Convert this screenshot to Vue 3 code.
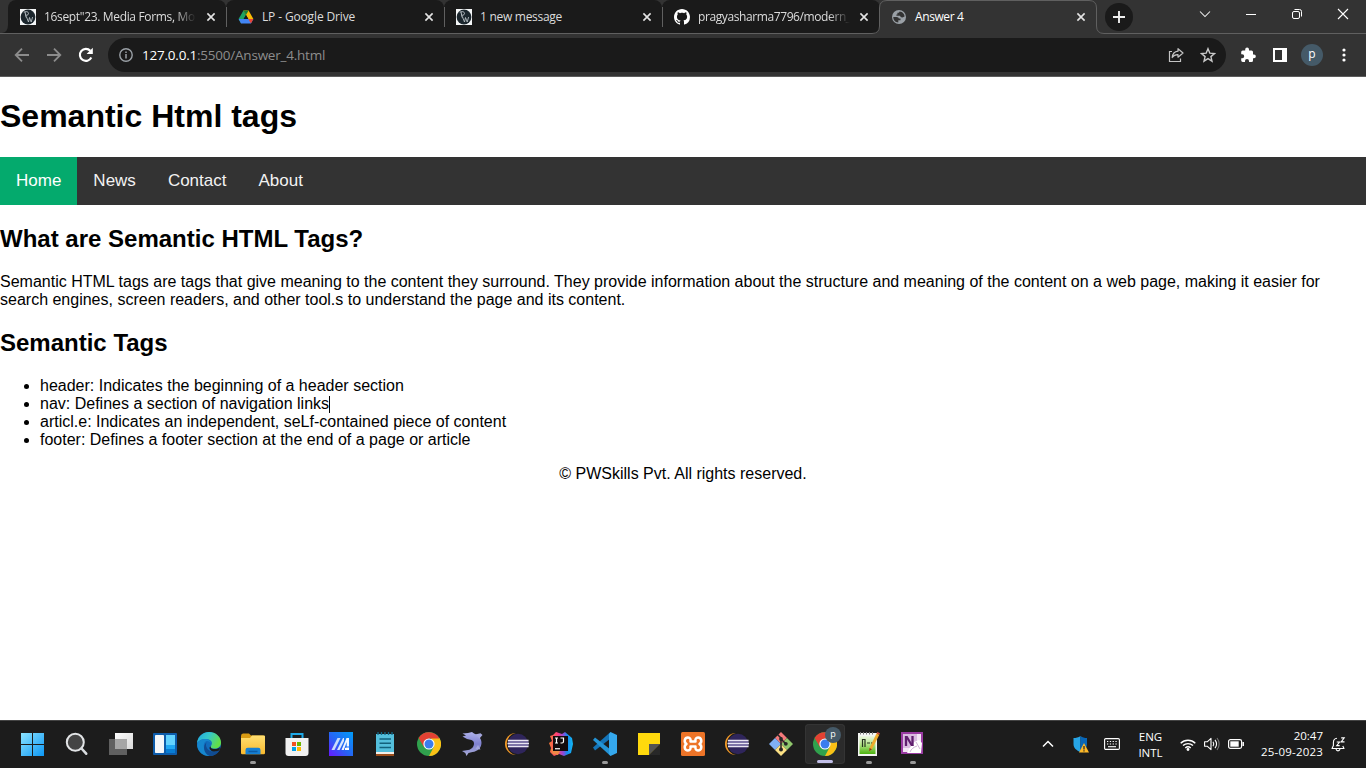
<script setup>
const tabs = [
  { title: '16sept"23. Media Forms, Mo', icon: 'pw', cls: 't1' },
  { title: 'LP - Google Drive', icon: 'drive', cls: 't2' },
  { title: '1 new message', icon: 'pw', cls: 't3' },
  { title: 'pragyasharma7796/modern_', icon: 'github', cls: 't4' },
  { title: 'Answer 4', icon: 'globe', cls: 'active' }
]
const links = ['Home', 'News', 'Contact', 'About']
const apps = [
  { n: 'start' }, { n: 'search' }, { n: 'taskview' }, { n: 'widgets' }, { n: 'edge' },
  { n: 'files', open: true }, { n: 'store' }, { n: 'myasus' }, { n: 'notepad' }, { n: 'chrome' },
  { n: 'dolphin' }, { n: 'eclipse' }, { n: 'intellij' }, { n: 'vscode', open: true }, { n: 'sticky' },
  { n: 'xampp' }, { n: 'eclipse' }, { n: 'git' }, { n: 'chrome', current: true },
  { n: 'notepadpp', open: true }, { n: 'onenote', open: true }
]
</script>

<template>
  <div class="screen">
    <header class="strip">
      <div v-for="(t, i) in tabs" :key="i" class="tab" :class="t.cls">
        <svg v-if="t.icon === 'pw'" class="fav" viewBox="0 0 16 16">
          <rect width="16" height="16" fill="#f4f6f7" />
          <circle cx="8" cy="8" r="7.400" fill="#1b262d" />
          <path d="M5 3l1.200 5.500M3.800 3.200c3-1.400 5.200 0 4.600 1.800-.4 1.100-1.600 1.400-2.800 1.200" fill="none" stroke="#c4cbcf" stroke-width=".9" />
          <path d="M6.300 7.500l2.200 5.500 1-4.500 1.700 4.500L12.600 8" fill="none" stroke="#c4cbcf" stroke-width=".8" />
        </svg>
        <svg v-else-if="t.icon === 'drive'" class="fav" viewBox="0 0 16 16">
          <path d="M5.400 1.500L.6 10l2.500 4.500L8 6z" fill="#1ea362" />
          <path d="M10.600 1.500L15.400 10h-5.100L5.400 1.500z" fill="#fbbc04" />
          <path d="M5.400 1.500L8 6l2.600-4.500z" fill="#188038" />
          <path d="M.6 10h14.800l-2.500 4.500H3.100z" fill="#4285f4" />
          <path d="M10.300 10h5.100l-2.500 4.500z" fill="#ea4335" />
          <path d="M8 6l2.300 4H5.700z" fill="#1a1a1a" />
        </svg>
        <svg v-else-if="t.icon === 'github'" class="fav" viewBox="0 0 16 16">
          <path fill="#fff" d="M8 0C3.580 0 0 3.580 0 8c0 3.540 2.290 6.530 5.470 7.590.4.070.55-.17.55-.38 0-.19-.01-.82-.01-1.490-2.010.37-2.530-.49-2.690-.94-.09-.23-.48-.94-.82-1.130-.28-.15-.68-.52-.01-.53.63-.01 1.080.58 1.230.82.72 1.210 1.870.87 2.330.66.070-.52.28-.87.51-1.070-1.780-.2-3.640-.89-3.640-3.950 0-.87.31-1.590.82-2.150-.08-.2-.36-1.020.08-2.120 0 0 .67-.21 2.200.82.64-.18 1.320-.27 2-.27s1.360.09 2 .27c1.530-1.040 2.200-.82 2.200-.82.44 1.100.16 1.920.08 2.120.51.56.82 1.270.82 2.150 0 3.070-1.870 3.750-3.650 3.950.29.25.54.73.54 1.480 0 1.070-.01 1.930-.01 2.200 0 .21.15.46.55.38A8.010 8.010 0 0016 8c0-4.420-3.580-8-8-8z" />
        </svg>
        <svg v-else class="fav" viewBox="0 0 16 16">
          <circle cx="8" cy="8" r="7" fill="#9aa0a6" />
          <path d="M2.300 8h3.200c1.800 0 2.200.8 2.300 1.600h1.700v1.700H7.300v2.200C4.200 13.300 2.200 11 2.300 8zM8.600 2.400c-.2.800-.6 1.300-2.200 1.300v1.700h-1v1.300h3.500c.6.800.8 1.700 2.300 1.700s1.300-.8 2.400-.8C13.600 4.900 11.500 2.500 8.600 2.400z" fill="#333" />
        </svg>
        <span class="title">{{ t.title }}</span>
        <svg class="close" viewBox="0 0 10 10"><path d="M1.400 1.400l7.200 7.200M8.600 1.400L1.400 8.600" stroke="#e4e4e4" stroke-width="1.600" /></svg>
      </div>
      <svg class="newtab" viewBox="0 0 28 28"><circle cx="14" cy="14" r="14" fill="#1a1a1a" /><path d="M14 8v12M8 14h12" stroke="#eee" stroke-width="1.900" /></svg>
      <div class="winctl">
        <svg viewBox="0 0 12 12"><path d="M1 3.500l5 5 5-5" fill="none" stroke="#f4f4f4" stroke-width="1.050" /></svg>
        <svg viewBox="0 0 12 12"><path d="M1 6.500h10" stroke="#fff" /></svg>
        <svg viewBox="0 0 12 12"><rect x="1.500" y="3.500" width="7" height="7" rx="1.500" fill="none" stroke="#fff" /><path d="M3.500 1.500h5a2 2 0 012 2v5" fill="none" stroke="#fff" /></svg>
        <svg viewBox="0 0 12 12"><path d="M1 1l10 10M11 1L1 11" stroke="#fff" stroke-width="1.100" /></svg>
      </div>
      <svg class="edgeline" viewBox="0 0 1366 34">
        <path d="M2 33Q8 32 8 25V33z" fill="#1a1a1a" />
        <path d="M0 33.500H872Q879.500 33.500 879.500 26V8Q879.500.5 887 .5H1089Q1096.500.5 1096.500 8V26Q1096.500 33.500 1104 33.500H1366" fill="none" stroke="#606060" />
      </svg>
    </header>

    <div class="toolbar">
      <svg class="nav back" viewBox="0 0 16 16"><path d="M15 8H2M8 1.700L1.700 8 8 14.300" fill="none" stroke="#8c8c8c" stroke-width="1.800" /></svg>
      <svg class="nav fwd" viewBox="0 0 16 16"><path d="M1 8h13M8 1.700L14.300 8 8 14.300" fill="none" stroke="#8c8c8c" stroke-width="1.800" /></svg>
      <svg class="nav reload" viewBox="0 0 16 16"><path d="M13.300 10.500A6 6 0 1112.300 3.800" fill="none" stroke="#fff" stroke-width="2.100" /><path d="M14.800.8v6.200H8.600z" fill="#fff" /></svg>
      <div class="omnibox">
        <svg class="info" viewBox="0 0 14 14"><circle cx="7" cy="7" r="6.200" fill="none" stroke="#9aa0a6" stroke-width="1.400" /><path d="M7 6v4.500M7 3.400v1.500" stroke="#9aa0a6" stroke-width="1.500" /></svg>
        <span class="url"><b>127.0.0.1</b>:5500/Answer_4.html</span>
        <svg class="share" viewBox="0 0 16 16"><path d="M4 4.500H1.500V14.500H12.500V11.500" fill="none" stroke="#c4c4c4" stroke-width="1.200" /><path d="M10 1.700L15 6l-5 4.200V7.700C7.500 7.600 5.600 8.400 4.200 10.500 4.500 7.200 6.500 4.700 10 4.200z" fill="none" stroke="#c4c4c4" stroke-width="1.200" stroke-linejoin="round" /></svg>
        <svg class="star" viewBox="0 0 16 16"><path d="M8 1.700l1.800 4.400 4.700.4-3.600 3.100 1.100 4.600L8 11.700l-4 2.500 1.100-4.600-3.600-3.100 4.700-.4z" fill="none" stroke="#c9c9c9" stroke-width="1.400" /></svg>
      </div>
      <svg class="puzzle" viewBox="0 0 16 16"><path d="M14 7.500h-1V5a1.500 1.500 0 00-1.500-1.500H9v-1a1.900 1.900 0 00-3.800 0v1H2.700A1.500 1.500 0 001.200 5v2.300h1a2 2 0 010 4h-1v2.300A1.500 1.500 0 002.700 15H5v-1a2 2 0 014 0v1h2.500a1.500 1.500 0 001.500-1.500v-2.300h1a1.850 1.850 0 000-3.700z" fill="#fff" /></svg>
      <svg class="panel" viewBox="0 0 14 14"><rect x="1" y="1" width="12" height="12" fill="none" stroke="#fff" stroke-width="2" /><path d="M9 1h4v12H9z" fill="#fff" /></svg>
      <span class="avatar">p</span>
      <svg class="dots" viewBox="0 0 4 16"><circle cx="2" cy="3" r="1.600" fill="#fff" /><circle cx="2" cy="8" r="1.600" fill="#fff" /><circle cx="2" cy="13" r="1.600" fill="#fff" /></svg>
    </div>

    <main class="page">
      <h1>Semantic Html tags</h1>
      <nav class="topnav"><a v-for="(l, i) in links" :key="l" :class="{ on: i === 0 }">{{ l }}</a></nav>
      <h2>What are Semantic HTML Tags?</h2>
      <p>Semantic HTML tags are tags that give meaning to the content they surround. They provide information about the structure and meaning of the content on a web page, making it easier for<br>search engines, screen readers, and other tool.s to understand the page and its content.</p>
      <h2>Semantic Tags</h2>
      <ul>
        <li>header: Indicates the beginning of a header section</li>
        <li>nav: Defines a section of navigation links<i class="caret"></i></li>
        <li>articl.e: Indicates an independent, seLf-contained piece of content</li>
        <li>footer: Defines a footer section at the end of a page or article</li>
      </ul>
      <footer>© PWSkills Pvt. All rights reserved.</footer>
    </main>

    <div class="taskbar">
      <svg class="defs" width="0" height="0">
        <defs>
          <linearGradient id="win" x1="0" y1="0" x2="1" y2="1"><stop offset="0" stop-color="#8be3ff" /><stop offset="1" stop-color="#0c97f5" /></linearGradient>
          <linearGradient id="folder" x1="0" y1="0" x2="0" y2="1"><stop offset="0" stop-color="#ffdf72" /><stop offset="1" stop-color="#f9b92d" /></linearGradient>
          <linearGradient id="asus" x1="1" y1="0" x2="0" y2="1"><stop offset="0" stop-color="#009df8" /><stop offset=".55" stop-color="#2763f4" /><stop offset="1" stop-color="#6818ff" /></linearGradient>
          <linearGradient id="edgeTop" x1="0" y1="0" x2="1" y2=".4"><stop offset="0" stop-color="#20a7df" /><stop offset=".5" stop-color="#35c8ca" /><stop offset="1" stop-color="#62df48" /></linearGradient>
          <linearGradient id="dol" x1="0" y1="0" x2="0" y2="1"><stop offset="0" stop-color="#aeb1ea" /><stop offset=".5" stop-color="#7f81d0" /><stop offset="1" stop-color="#aaaed8" /></linearGradient>
          <linearGradient id="ij" x1="0" y1="0" x2="1" y2="0"><stop offset="0" stop-color="#f97a35" /><stop offset=".35" stop-color="#ff3c78" /><stop offset=".6" stop-color="#8b4bdc" /><stop offset=".75" stop-color="#1689ee" /><stop offset="1" stop-color="#13b9f4" /></linearGradient>
          <linearGradient id="task" x1="0" y1="0" x2="1" y2="1"><stop offset="0" stop-color="#fff" /><stop offset="1" stop-color="#d8d8d8" /></linearGradient>
          <linearGradient id="npp" x1="0" y1="0" x2="0" y2="1"><stop offset="0" stop-color="#eef8e4" /><stop offset=".45" stop-color="#b5e58a" /><stop offset="1" stop-color="#4db30f" /></linearGradient>
        </defs>
      </svg>
      <div class="apps">
        <div v-for="(a, i) in apps" :key="i" class="app" :class="{ open: a.open, current: a.current }">
          <svg class="ico" viewBox="0 0 24 24">
            <g v-if="a.n === 'start'"><path d="M0 1h23v23H0z" fill="url(#win)" /><path d="M11 1h1v23h-1zM0 12h23v1H0z" fill="#1c1c1c" /></g>
            <g v-else-if="a.n === 'search'"><circle cx="10.300" cy="10.300" r="8.500" fill="#444" stroke="#e2e4e6" stroke-width="2" /><path d="M16.500 16.500l4.700 5.200" stroke="#d9dcdf" stroke-width="2.600" stroke-linecap="round" /></g>
            <g v-else-if="a.n === 'taskview'"><path d="M6 1h18v16H6z" fill="url(#task)" /><path d="M0 7h18v16H0z" fill="#606060" /><path d="M6 7h12v10H6z" fill="#a6a6a6" /></g>
            <g v-else-if="a.n === 'widgets'"><rect y="1" width="24" height="22" rx="1" fill="#0d5cab" /><rect x="2" y="3" width="9" height="18" rx=".8" fill="#f4f7fa" /><path d="M13 3h9v10h-9z" fill="#63d3ff" /><path d="M13 13h9v4h-9z" fill="#20a9f4" /><path d="M13 17h9v4h-9z" fill="#087dd4" /></g>
            <g v-else-if="a.n === 'edge'"><circle cx="12" cy="12" r="12" fill="#126dbd" /><path d="M0 11C1 4 6 0 12 0c7 0 12 5 12 10.500 0 4-3 6-6.500 6-2.800 0-4.600-1.100-3.500-2.600 2.600-3.800-.6-7-5-7-4.500 0-7.500 1.600-9 4.100z" fill="url(#edgeTop)" /><path d="M9.500 9C5 10.500 6 20 13 23.900 7 24.500 1.600 20.500.4 15-.5 10 3 7 8.300 7c3 0 5.700 1.600 5.700 4.500-.8-2-2.500-2.800-4.500-2.500z" fill="#1687ce" /><path d="M9.700 10.200c-2.200 3.300.8 9.700 7 9.300 2.200-.1 3.900-.8 5.400-1.600.5-.2.7 0 .5.400-2.500 4.200-6.200 5.700-10 5.700C7 22 5 13.500 9.700 10.200z" fill="#104c93" /><path d="M14 14.600c-1 1.200.4 2.500 4 2.500 2 0 3.700-.6 5-2l-.5 3c-3.700 2.400-8.500 1.600-9.800-1.200-.4-1.300-.1-2 1.300-2.300z" fill="#1c1c1c" /></g>
            <g v-else-if="a.n === 'files'"><path d="M0 4Q0 1.500 2 1.500h6l2 2H22q2 0 2 2V9H0z" fill="#d99b13" /><path d="M0 6h9l2-2.500h12q1 0 1 1V21q0 1.300-1.300 1.300H1.300Q0 22.300 0 21z" fill="url(#folder)" /><path d="M4.500 22.300V18q0-2.200 2.200-2.200h10.600q2.200 0 2.200 2.200v4.300z" fill="#1680d4" /><path d="M7.500 19.500h9" stroke="#0b5ba6" stroke-width="1.500" /></g>
            <g v-else-if="a.n === 'store'"><path d="M6.500 6V2h11v4" fill="none" stroke="#1da9e8" stroke-width="2" /><path d="M.5 6h23v15q0 3-3 3h-17q-3 0-3-3z" fill="#f1f1f1" /><path d="M7 10h4v4H7z" fill="#f25022" /><path d="M12 10h4v4h-4z" fill="#6bb700" /><path d="M7 15h4v4H7z" fill="#009fe8" /><path d="M12 15h4v4h-4z" fill="#ffb900" /></g>
            <g v-else-if="a.n === 'myasus'"><path d="M0 0h24v24H0z" fill="url(#asus)" /><path d="M2.500 18L8.500 6h3L5.500 18z" fill="#c9dcfb" /><path d="M8 18l6-12h1v3l-4.500 9z" fill="#dbe8fd" /><path d="M12.500 18l5-12H20v8.500h-2.300V10L14.800 18z" fill="#f2f7ff" /><path d="M16 18v-2l2-.5h2V18z" fill="#fff" /></g>
            <g v-else-if="a.n === 'notepad'"><path d="M3 2h18v18H3z" fill="#54bfdc" /><path d="M5 0v3M8.500 0v3M12 0v3M15.500 0v3M19 0v3" stroke="#146887" stroke-width="1.300" /><path d="M6.500 7h11.500M6.500 11.300h11.500M6.500 15.500h11.500" stroke="#12617c" stroke-width="1.500" /><path d="M3 20h18v2H3z" fill="#f2eee8" /><path d="M3 22h18v2H3z" fill="#9b4d1b" /></g>
            <g v-else-if="a.n === 'chrome'"><circle cx="12" cy="12" r="12" fill="#30a14d" /><path d="M22.400 6A12 12 0 0112 24l5-9.500L14 6z" fill="#fbc116" /><path d="M1.600 6A12 12 0 0122.400 6.500H12L6.900 15z" fill="#e34133" /><circle cx="12" cy="12" r="5.600" fill="#fff" /><circle cx="12" cy="12" r="4.500" fill="#3b7ded" /></g>
            <g v-else-if="a.n === 'dolphin'"><path d="M1.500 1.500L7 1l4-1 2 1.500c4.500 1.500 7.500 5 7.500 9.500-.2 5-4 8.500-9 9L7.500 21 5.500 24l-1.200-3L1 19l4.500-.8C10 18 12.500 15.500 13 12c.2-2-.7-3.300-2.500-4L6 7 1.500 4.500 5 3.500z" fill="url(#dol)" /><path d="M14 2.500l5.500-1.200L21.500 3l-3 3.500M17 13l2.500 4.500-5-.5" fill="#a4a7dd" /></g>
            <g v-else-if="a.n === 'eclipse'"><circle cx="11" cy="12" r="11" fill="#f59b28" /><circle cx="13" cy="12" r="11.200" fill="#1c1c1c" /><circle cx="13" cy="12" r="10.200" fill="#2f255b" /><path d="M3 8.500h20.600M2.500 11.500h21.500M3 14.500h20.600" stroke="#e9e6f2" stroke-width="1.500" /><path d="M3 10h20.600M3 13h20.600" stroke="#8980b4" stroke-width="1.500" /></g>
            <g v-else-if="a.n === 'intellij'"><path d="M1 4l3-1 3-3 6 2 3-2 7 6 1 6-2 9-7 3-5-2-5 2-4-4 1-4-2-5 3-2z" fill="url(#ij)" /><path d="M2 17h10l-3 6-5-1z" fill="#ef8a45" /><path d="M4 4h15v15H4z" fill="#130b0d" /><path d="M6 6h3M7.500 6v5M6 11h3M11.500 6h3v3.500q0 1.500-1.500 1.500h-1.500" stroke="#fff" stroke-width="1.200" fill="none" /><path d="M6 16.700h5" stroke="#ddd" stroke-width="1.400" /></g>
            <g v-else-if="a.n === 'vscode'"><path d="M0 15.500L17.500 0v6.500L2 18.500z" fill="#1474b8" /><path d="M0 8l2-2.500 15.500 12V24z" fill="#2494d6" /><path d="M17.500 0L24 3v18l-6.500 3L16 22V2z" fill="#35a8ed" /></g>
            <g v-else-if="a.n === 'sticky'"><path d="M1 1h22v11L12 23H1z" fill="#ffd90d" /><path d="M12 12h11L12 23z" fill="#535353" /><path d="M23 12L12 23h11z" fill="#282828" /></g>
            <g v-else-if="a.n === 'xampp'"><rect width="24" height="24" rx="1.500" fill="#ed7428" /><path d="M9.500 9.500h5C14 7 15 5.500 17 5.500c3.500 0 4.500 4.500 1.500 6.500 3 2 2 6.500-1.500 6.500-2 0-3-1.500-2.500-4h-5c.5 2.500-.5 4-2.500 4-3.500 0-4.500-4.500-1.500-6.500-3-2-2-6.500 1.500-6.500 2 0 3 1.500 2.500 4z" fill="none" stroke="#fff" stroke-width="2.500" stroke-linejoin="round" /></g>
            <g v-else-if="a.n === 'git'"><path d="M12 0l6 6-6 6-6-6z" fill="#f4797a" /><path d="M6 6l6 6-6 6-6-6z" fill="#7fb0f5" /><path d="M18 6l6 6-6 6-6-6z" fill="#8fc76c" /><path d="M12 12l6 6-6 6-6-6z" fill="#fbe084" /><path d="M8.500 2.500L12 6v13M12 7l5 5" stroke="#262626" stroke-width="1.500" fill="none" /><circle cx="12" cy="7" r="1.900" fill="#262626" /><circle cx="16.800" cy="11.800" r="1.900" fill="#262626" /><circle cx="12" cy="17.500" r="2" fill="#262626" /></g>
            <g v-else-if="a.n === 'notepadpp'"><path d="M1 1h19v23H1z" fill="#f4f6f3" /><path d="M2.500 4h16v18h-16z" fill="url(#npp)" /><path d="M3.500 0v2.500M6.500 0v2.500M9.500 0v2.500M12.500 0v2.500M15.500 0v2.500" stroke="#777" stroke-width="1" /><path d="M5.500 15V7.500H8V15M10 11h3M14 11h2.500" stroke="#26331e" stroke-width="1.200" fill="none" /><path d="M12.500 16L19.500 1.500l2.800 1.300L15 17.200l-2.800 2z" fill="#efab2d" /><path d="M19.500 1.500L20.300 0l2.700 1.200-.7 1.600z" fill="#c94b38" /><path d="M12.500 16l2.500 1.200-2.800 2z" fill="#7b3d1b" /></g>
            <g v-else><path d="M0 0h22v22H0z" fill="#9a3ba3" /><path d="M2 2h18v18H2z" fill="#f3e6f5" /><path d="M2 2h14v14H2z" fill="#d9bbe0" /><path d="M13 10l5-2 3 3-1 10H6l2-4z" fill="#fff" /><path d="M5 14V4M11.500 14V4" stroke="#5f1d6e" stroke-width="2.300" /><path d="M4 4h2.500l6 10H10z" fill="#5f1d6e" /><path d="M9 20c1-3 4-5 7-6M15 10l4 7" stroke="#cfb2d6" stroke-width="1" fill="none" /></g>
          </svg>
          <span v-if="a.current" class="badge">p</span>
        </div>
      </div>
      <div class="tray">
        <svg class="up" viewBox="0 0 12 8"><path d="M1 6.500l5-5 5 5" fill="none" stroke="#fff" stroke-width="1.500" /></svg>
        <svg class="shield" viewBox="0 0 16 17"><path d="M7.500 0C5.500 1.500 3 2 .5 2v6c0 4 3 6.500 7 8z" fill="#27a5e6" /><path d="M7.500 0c2 1.500 4 2 6.500 2v6c0 4-2.500 6.500-6.500 8z" fill="#0866b7" /><path d="M11 7l5 9.500H6z" fill="#fdb827" /><path d="M11 10v3.500M11 14.200v1.300" stroke="#222" stroke-width="1.200" /></svg>
        <svg class="kb" viewBox="0 0 16 12"><rect x=".6" y=".6" width="14.800" height="10.800" rx="1.200" fill="none" stroke="#fff" stroke-width="1.100" /><path d="M3 3.500h10.500M3 6h10.500" stroke="#fff" stroke-width="1.200" stroke-dasharray="1.300 1.500" /><path d="M4 8.700h8" stroke="#fff" stroke-width="1.100" /></svg>
        <div class="lang"><span>ENG</span><span>INTL</span></div>
        <svg class="wifi" viewBox="0 0 16 13"><g fill="none" stroke="#fff" stroke-width="1.400"><path d="M.7 5.200a10.500 10.500 0 0114.600 0M3 7.600a7.200 7.200 0 0110 0M5.300 9.900a4 4 0 015.400 0" /></g><circle cx="8" cy="11.500" r="1.400" fill="#fff" /></svg>
        <svg class="vol" viewBox="0 0 16 14"><path d="M.6 4.800h2.600L7 1.400v11.200L3.200 9.200H.6z" fill="none" stroke="#fff" stroke-width="1.100" stroke-linejoin="round" /><path d="M9 4.700a4 4 0 010 4.600M11 2.800a7 7 0 010 8.400" fill="none" stroke="#fff" stroke-width="1.100" /><path d="M13 1a9.500 9.500 0 010 12" fill="none" stroke="#777" stroke-width="1.100" /></svg>
        <svg class="bat" viewBox="0 0 16 10"><rect x=".6" y=".6" width="13" height="8.800" rx="1.800" fill="none" stroke="#fff" stroke-width="1.200" /><path d="M2.300 2.300h8.400v5.400H2.300z" fill="#fff" /><path d="M15.200 3v4" stroke="#fff" stroke-width="1.500" /></svg>
        <div class="clock"><span>20:47</span><span class="date">25-09-2023</span></div>
        <svg class="bell" viewBox="0 0 15 15"><path d="M6 1.300C4 1.500 2.400 3.200 2.400 5.500v3L1 11.500h12L11.800 9M5 12c.5 2.500 3.500 2.500 4 0" fill="none" stroke="#fff" stroke-width="1.100" stroke-linejoin="round" /><path d="M5.700 5h2.800L5.700 8.600h3M10.200.9h3L10.200 4.900h3.300" fill="none" stroke="#fff" stroke-width="1.100" /></svg>
      </div>
    </div>
  </div>
</template>

<style>
html, body { margin: 0; overflow: hidden; }
</style>

<style scoped>
.screen { width: 1366px; height: 768px; display: flex; flex-direction: column; background: #fff; overflow: hidden; font-family: "Open Sans", "Noto Sans", sans-serif; }
svg { display: block; flex: none; }
.strip { position: relative; height: 34px; background: #333; display: flex; padding-left: 8px; box-sizing: border-box; flex: none; }
.tab { position: relative; width: 218px; height: 34px; box-sizing: border-box; display: flex; align-items: center; padding-left: 12px; background: #1a1a1a; border-radius: 8px 8px 0 0; color: #dcdcdc; font-size: 12px; flex: none; }
.tab.t1::after, .tab.t2::after, .tab.t3::after { content: ""; position: absolute; z-index: 1; right: -1px; top: 7px; height: 20px; width: 1px; background: #606060; }
.tab.t4 { border-radius: 8px 8px 8px 0; }
.tab.active { background: #333; width: 217px; color: #fff; padding-left: 11px; }
.fav { width: 16px; height: 16px; }
.title { margin-left: 8px; width: 152px; white-space: nowrap; letter-spacing: -.22px; line-height: 18px; }
.t1 .title, .t4 .title { -webkit-mask-image: linear-gradient(90deg, #000 86%, transparent 100%); mask-image: linear-gradient(90deg, #000 86%, transparent 100%); }
.t1 .title { letter-spacing: -.34px; }
.t2 .title { letter-spacing: -.14px; }
.t3 .title { letter-spacing: -.28px; }
.t4 .title { letter-spacing: -.4px; }
.active .title { letter-spacing: -.4px; }
.close { width: 10px; height: 10px; margin-left: 10px; }
.t4 .close, .active .close { margin-left: 9px; }
.newtab { width: 28px; height: 28px; margin: 3px 0 0 8px; }
.winctl { display: flex; gap: 34px; margin: 8px 0 0 66px; }
.winctl svg { width: 12px; height: 12px; }
.edgeline { position: absolute; left: 0; top: 0; width: 1366px; height: 34px; }
.toolbar { height: 43px; box-sizing: border-box; border-bottom: 1px solid #5c5c5c; background: #333; display: flex; align-items: center; padding-left: 14px; flex: none; }
.nav { width: 16px; height: 16px; margin-right: 16px; }
.reload { margin-right: 14px; }
.omnibox { width: 1118px; height: 34px; box-sizing: border-box; border-radius: 17px; background: #1a1a1a; display: flex; align-items: center; padding: 0 10px 0 11px; flex: none; }
.info { width: 14px; height: 14px; }
.url { margin-left: 9px; font-size: 13.5px; letter-spacing: -.22px; color: #8d8d8d; flex: 1; white-space: nowrap; }
.url b { font-weight: 400; color: #fff; }
.share, .star { width: 16px; height: 16px; }
.star { margin-left: 16px; }
.puzzle { width: 16px; height: 16px; margin-left: 14px; }
.panel { width: 14px; height: 14px; margin-left: 17px; }
.avatar { width: 22px; height: 22px; border-radius: 50%; background: #455a68; color: #fff; font-size: 12px; line-height: 20px; text-align: center; margin-left: 14px; }
.dots { width: 4px; height: 16px; margin-left: 19px; }
.page { flex: 1; font-family: "Liberation Sans", Arial, sans-serif; font-size: 16px; line-height: 18px; color: #000; display: flow-root; }
h1 { font-size: 32px; line-height: 37px; margin: 21px 0 22px; }
.topnav { background: #333; height: 48px; display: flex; }
.topnav a { color: #f2f2f2; font-size: 17px; line-height: 20px; padding: 14px 16px; }
.topnav a.on { background: #04aa6d; color: #fff; }
h2 { font-size: 24px; line-height: 27px; margin: 20px 0 21px; }
.page p { margin: 0; white-space: nowrap; }
ul { margin: 21px 0 16px; padding-left: 40px; }
.caret { display: inline-block; width: 1px; height: 17px; margin-bottom: -4px; vertical-align: baseline; background: #000; }
footer { text-align: center; }
.taskbar { height: 48px; box-sizing: border-box; border-top: 1px solid #444; background: #1c1c1c; display: flex; justify-content: space-between; flex: none; color: #fff; }
.defs { position: absolute; }
.apps { display: flex; gap: 4px; padding: 3px 0 0 13px; }
.app { position: relative; width: 40px; height: 40px; box-sizing: border-box; padding: 8px; border-radius: 4px; }
.ico { width: 24px; height: 24px; }
.app.current { background: #2b2b2b; box-shadow: inset 0 0 0 1px #343434; }
.app.open::after, .app.current::after { content: ""; position: absolute; left: 17px; bottom: 0; width: 6px; height: 3px; border-radius: 2px; background: #9a9a9a; }
.app.current::after { left: 12px; width: 16px; background: #c2bfe8; bottom: 1px; }
.badge { position: absolute; left: 20px; top: 3px; width: 16px; height: 16px; border-radius: 50%; background: #455a68; text-align: center; font-size: 9px; line-height: 14px; }
.tray { display: flex; align-items: center; height: 46px; font-size: 11.5px; line-height: 16px; }
.up { width: 12px; height: 8px; margin-right: 19px; }
.shield { width: 16px; height: 17px; margin-right: 15px; }
.kb { width: 16px; height: 12px; margin-right: 18px; }
.lang { display: flex; flex-direction: column; align-items: center; width: 25px; margin-right: 17px; padding-top: 2px; }
.wifi { width: 16px; height: 13px; margin-right: 8px; }
.vol { width: 16px; height: 14px; margin-right: 8px; }
.bat { width: 16px; height: 10px; margin-right: 15px; }
.clock { display: flex; flex-direction: column; align-items: flex-end; width: 64px; white-space: nowrap; margin-right: 8px; }
.date { letter-spacing: .2px; }
.bell { width: 15px; height: 15px; margin-right: 20px; }
</style>
